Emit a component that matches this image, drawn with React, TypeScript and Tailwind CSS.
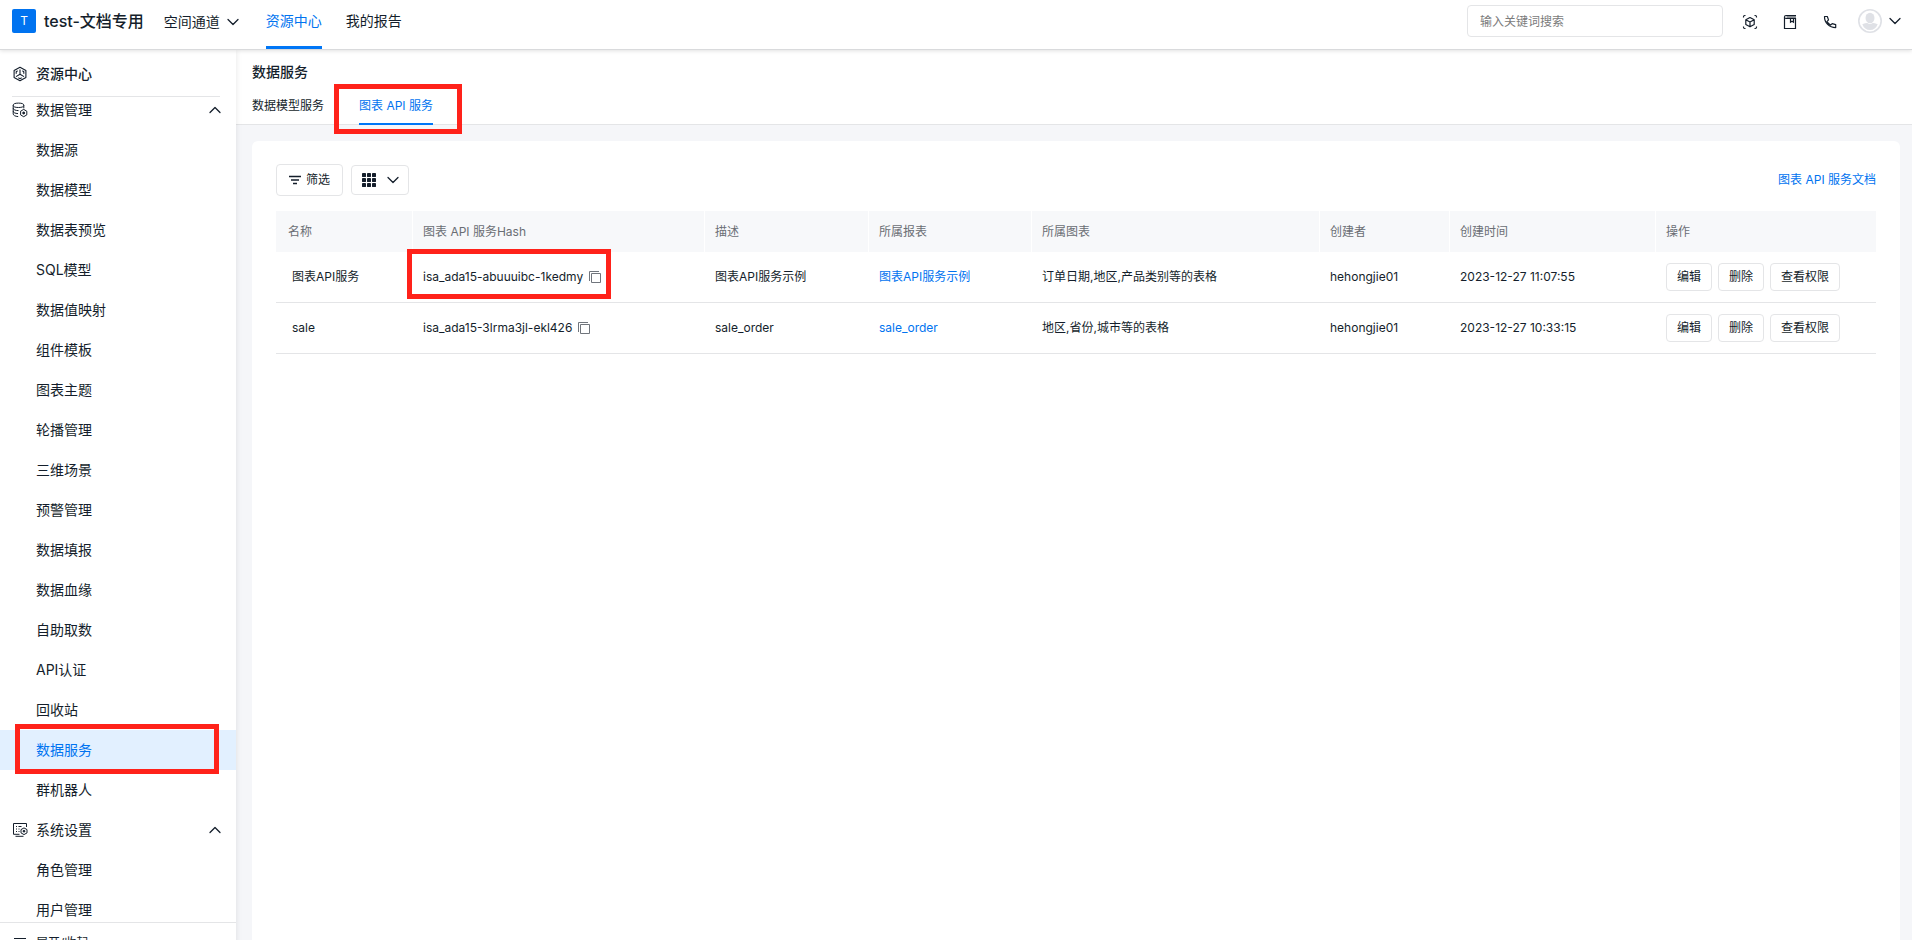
import React from 'react';
import { ChevronDown, ChevronUp } from 'lucide-react';

const dataMenu = [
  '数据源', '数据模型', '数据表预览', 'SQL模型', '数据值映射', '组件模板', '图表主题', '轮播管理', '三维场景',
  '预警管理', '数据填报', '数据血缘', '自助取数', 'API认证', '回收站', '数据服务', '群机器人',
];
const systemMenu = ['角色管理', '用户管理'];

const columns = [
  { title: '名称', width: 'w-[137px]' },
  { title: '图表 API 服务Hash', width: 'w-[292px]' },
  { title: '描述', width: 'w-[164px]' },
  { title: '所属报表', width: 'w-[163px]' },
  { title: '所属图表', width: 'w-[288px]' },
  { title: '创建者', width: 'w-[130px]' },
  { title: '创建时间', width: 'w-[206px]' },
  { title: '操作', width: 'w-[220px]' },
];

const services = [
  {
    name: '图表API服务',
    hash: 'isa_ada15-abuuuibc-1kedmy',
    desc: '图表API服务示例',
    report: '图表API服务示例',
    chart: '订单日期,地区,产品类别等的表格',
    creator: 'hehongjie01',
    createdAt: '2023-12-27 11:07:55',
    marked: true,
  },
  {
    name: 'sale',
    hash: 'isa_ada15-3lrma3jl-ekl426',
    desc: 'sale_order',
    report: 'sale_order',
    chart: '地区,省份,城市等的表格',
    creator: 'hehongjie01',
    createdAt: '2023-12-27 10:33:15',
    marked: false,
  },
];

const Highlight = ({ className }: { className: string }) => (
  <span aria-hidden="true" className={`pointer-events-none absolute z-20 border-5 border-[#ff221a] ${className}`} />
);

const ResourceIcon = () => (
  <svg viewBox="0 0 16 16" className="size-4 shrink-0" fill="none" stroke="currentColor" strokeWidth="1.1">
    <path d="M8 1.2 13.9 4.5v7L8 14.8 2.1 11.5v-7z" strokeLinejoin="round" />
    <path d="M8 3.5v4.7M8 8.2 4 10.6M8 8.2l4 2.4" />
    <path d="M5.6 4.8 4.2 5.7v2M10.4 4.8l1.4.9v2M6.3 11.8l1.7.9 1.7-.9" />
  </svg>
);

const DatabaseIcon = () => (
  <svg viewBox="0 0 16 16" className="size-4 shrink-0" fill="none" stroke="currentColor" strokeWidth="1">
    <ellipse cx="6.5" cy="3.3" rx="5.3" ry="2.2" />
    <path d="M1.2 3.3v8.6c0 1.400 2 2.500 5 2.700M11.800 3.300v3" />
    <path d="M1.200 6.200c0 1.400 2.300 2.400 5.300 2.400M1.200 9.200c0 1.300 2 2.300 4.800 2.400" />
    <path d="m11.700 7.400 3.100 1.800v3.700l-3.100 1.800-3.100-1.800V9.200z" />
    <circle cx="11.700" cy="11" r="1" fill="currentColor" />
  </svg>
);

const SystemIcon = () => (
  <svg viewBox="0 0 16 16" className="size-4 shrink-0" fill="none" stroke="currentColor" strokeWidth="1">
    <path d="M14.500 5V1.500h-13v10.800h6M3.500 14.300h8" />
    <path d="M4 4.500h1M4 7h1M4 9.500h1M6.500 4.500h3M6.500 7h1M6.500 9.500h1" />
    <path d="m12 5.900 3 1.700v3.300l-3 1.700-3-1.700V7.600z" />
    <circle cx="12" cy="9.200" r=".9" fill="currentColor" />
  </svg>
);

const CubeIcon = () => (
  <svg viewBox="0 0 16 16" className="size-4" fill="none" stroke="currentColor" strokeWidth="1.2">
    <path d="m8 3.500 4.200 2.300v4.600L8 12.800l-4.200-2.400V5.800zM3.800 5.800 8 8l4.200-2.200M8 8v4.800" strokeLinejoin="round" />
    <path d="M1.500 3.500v-.8q0-1.200 1.200-1.200h.8M12.500 1.500h.8q1.200 0 1.200 1.200v.8M14.500 12.500v.8q0 1.200-1.200 1.200h-.8M3.500 14.500h-.8q-1.200 0-1.200-1.200v-.8" />
  </svg>
);

const BookIcon = () => (
  <svg viewBox="0 0 16 16" className="size-4" fill="none" stroke="currentColor" strokeWidth="1.2">
    <path d="M14 1.500H4a1.500 1.500 0 0 0 0 3h9.500v10h-11V3" />
    <path d="M4.500 3H14M8.500 5v3.200l1.500-1 1.500 1V5" />
  </svg>
);

const PhoneIcon = () => (
  <svg viewBox="0 0 16 16" className="size-4" fill="none" stroke="currentColor" strokeWidth="1.2" strokeLinejoin="round">
    <path d="M2.500 2.500h2.800l1.200 3.400-1.500 1.700a8.500 8.500 0 0 0 3.600 3.400l1.600-1.400 3.500 1v3C7.200 13.600 2.400 8.800 2.500 2.500z" />
  </svg>
);

const CopyIcon = () => (
  <svg viewBox="0 0 12 12" className="size-3" fill="none" stroke="#70757c" strokeWidth="1">
    <path d="M2.500 2.500h9v9h-9z" />
    <path d="M.5 10V.5H10" />
  </svg>
);

const FilterIcon = () => (
  <svg viewBox="0 0 12 12" className="size-3" fill="none" stroke="currentColor" strokeWidth="1.300">
    <path d="M0 2.500h12M2 6h8M4 9.500h4" />
  </svg>
);

const GridIcon = () => (
  <svg viewBox="0 0 14 14" className="size-[14px]" fill="currentColor">
    {[0, 5, 10].map(y =>
      [0, 5, 10].map(x => <rect key={`${x}-${y}`} x={x} y={y} width="4" height="4" rx=".4" />)
    )}
  </svg>
);

const AvatarIcon = () => (
  <svg viewBox="0 0 24 24" className="size-6">
    <circle cx="12" cy="12" r="11.200" fill="#fff" stroke="#dfe1e6" strokeWidth="1.600" />
    <ellipse cx="12" cy="9" rx="4.500" ry="5.200" fill="#dfe1e6" />
    <path d="M4.300 15.200Q8 13.800 9.300 14q2.700 2.200 5.400 0 1.300-.2 5 1.200Q17.500 21 12 21t-7.700-5.800z" fill="#dfe1e6" />
  </svg>
);

const Header = () => (
  <header className="relative z-10 flex h-[50px] shrink-0 items-start border-b border-[#d9dadc] bg-white pr-[7px] pl-3 shadow-[0_1px_4px_rgba(0,0,0,0.12)]">
    <div className="flex h-[42px] items-center gap-2">
      <span className="flex size-6 items-center justify-center rounded-xs bg-[#0073f0] text-xs text-white">T</span>
      <h1 className="text-base font-medium">test-文档专用</h1>
    </div>
    <button type="button" className="ml-5 flex h-[44px] items-center gap-[3px]">
      空间通道
      <ChevronDown className="size-5" strokeWidth={1.5} />
    </button>
    <nav className="ml-[23px] flex h-[49px] gap-6">
      <a href="#resource" className="h-full border-b-3 border-[#0076f6] leading-[42px] text-[#0073f0]">资源中心</a>
      <a href="#report" className="leading-[42px]">我的报告</a>
    </nav>
    <div className="ml-auto flex h-[42px] items-center">
      <input
        type="search"
        aria-label="搜索"
        placeholder="输入关键词搜索"
        className="mr-[19px] h-8 w-64 rounded border border-[#e4e5e7] px-3 text-xs placeholder:text-[#7b7b7b]"
      />
      <div className="flex gap-6 pt-[2px]">
        <button type="button" aria-label="三维"><CubeIcon /></button>
        <button type="button" aria-label="文档"><BookIcon /></button>
        <button type="button" aria-label="电话"><PhoneIcon /></button>
      </div>
      <button type="button" aria-label="账户" className="ml-5 flex items-center gap-[3px]">
        <AvatarIcon />
        <ChevronDown className="size-5" strokeWidth={1.5} />
      </button>
    </div>
  </header>
);

const MenuGroup = ({ title, icon, items }: { title: string; icon: React.ReactNode; items: string[] }) => (
  <section>
    <button type="button" className="flex h-10 w-full items-center pr-[11px] pl-3 text-left">
      {icon}
      <span className="ml-2 flex-1">{title}</span>
      <ChevronUp className="size-5" strokeWidth={1.5} />
    </button>
    <ul>
      {items.map(item => (
        <li key={item} className="relative">
          <a
            href="#menu"
            className={`block h-10 pl-9 leading-10 ${item === '数据服务' ? 'bg-[#e2f0ff] text-[#0073f0]' : ''}`}
          >
            {item}
          </a>
          {item === '数据服务' && <Highlight className="-top-[6px] right-[17px] -bottom-1 left-[15px]" />}
        </li>
      ))}
    </ul>
  </section>
);

const Sidebar = () => (
  <aside className="relative z-[1] flex h-[calc(100%+23px)] w-[236px] shrink-0 flex-col bg-white shadow-[0_0_6px_rgba(0,0,0,0.1)]">
    <div className="mr-4 ml-3 flex h-[47px] shrink-0 items-center gap-2 border-b border-[#e4e5e7] pt-[2px]">
      <ResourceIcon />
      <h2 className="font-medium">资源中心</h2>
    </div>
    <div className="-mt-[7px] min-h-0 flex-1 overflow-hidden">
      <MenuGroup title="数据管理" icon={<DatabaseIcon />} items={dataMenu} />
      <MenuGroup title="系统设置" icon={<SystemIcon />} items={systemMenu} />
    </div>
    <button type="button" className="flex h-[41px] shrink-0 items-center gap-2 border-t border-[#e4e5e7] pl-3 text-xs">
      <svg viewBox="0 0 16 16" className="size-4" stroke="currentColor" strokeWidth="1.200">
        <path d="M2 3.500h12M2 8h12M2 12.500h12" />
      </svg>
      展开/收起
    </button>
  </aside>
);

const ServiceTable = () => (
  <table className="mt-[15px] w-full table-fixed border-separate border-spacing-0 text-left text-xs">
    <thead>
      <tr className="bg-[#f7f8fa] text-[#6a6e74]">
        {columns.map(col => (
          <th key={col.title} className={`h-[41px] border-r border-white px-[10px] font-normal first:pl-3 last:border-r-0 ${col.width}`}>
            {col.title}
          </th>
        ))}
      </tr>
    </thead>
    <tbody>
      {services.map(row => (
        <tr key={row.name} className="[&>td]:h-[51px] [&>td]:border-b [&>td]:border-[#e4e5e7]">
          <td className="pl-4">{row.name}</td>
          <td className="relative px-[10px]">
            <div className="flex items-center gap-[6px]">
              {row.hash}
              <button type="button" aria-label="复制"><CopyIcon /></button>
            </div>
            {row.marked && <Highlight className="-top-[3px] -left-[6px] h-[50px] w-[204px]" />}
          </td>
          <td className="px-[10px]">{row.desc}</td>
          <td className="px-[10px]">
            <a href="#dashboard" className="text-[#0073f0]">{row.report}</a>
          </td>
          <td className="px-[10px]">{row.chart}</td>
          <td className="px-[10px]">{row.creator}</td>
          <td className="px-[10px]">{row.createdAt}</td>
          <td className="px-[10px]">
            <div className="flex gap-[6px]">
              {['编辑', '删除', '查看权限'].map(action => (
                <button key={action} type="button" className="h-7 rounded border border-[#e4e5e7] px-[10px] whitespace-nowrap">
                  {action}
                </button>
              ))}
            </div>
          </td>
        </tr>
      ))}
    </tbody>
  </table>
);

const App = () => {
  return (
    <div className="flex h-screen flex-col overflow-hidden bg-[#f5f6f9] font-[Inter,'Noto_Sans_CJK_SC',sans-serif] text-sm text-[#141e2b]">
      <Header />
      <div className="flex min-h-0 flex-1">
        <Sidebar />
        <main className="flex min-w-0 flex-1 flex-col">
          <div className="h-[75px] shrink-0 border-b border-[#e4e5e7] bg-white px-4 pt-3">
            <h2 className="leading-5 font-medium">数据服务</h2>
            <div className="flex gap-[35px] text-xs leading-10">
              <a href="#model" className="h-[43px] pt-1">数据模型服务</a>
              <div className="relative">
                <a href="#chart" className="block h-[43px] border-b-2 border-[#0076f6] pt-1 text-[#0073f0]">图表 API 服务</a>
                <Highlight className="top-[2px] -right-[29px] -bottom-[9px] -left-[25px]" />
              </div>
            </div>
          </div>
          <div className="mt-4 mr-3 ml-4 flex-1 rounded-t-md bg-white px-6 pt-[23px]">
            <div className="flex items-center text-xs">
              <button type="button" className="flex h-8 items-center gap-[5px] rounded border border-[#e4e5e7] px-3">
                <FilterIcon />
                筛选
              </button>
              <button type="button" aria-label="显示列" className="ml-2 flex h-[30px] items-center gap-[7px] rounded border border-[#e4e5e7] pr-[5px] pl-[10px]">
                <GridIcon />
                <ChevronDown className="size-5" strokeWidth={1.5} />
              </button>
              <a href="#docs" className="ml-auto text-[#0073f0]">图表 API 服务文档</a>
            </div>
            <ServiceTable />
          </div>
        </main>
      </div>
    </div>
  );
};

export default App;
